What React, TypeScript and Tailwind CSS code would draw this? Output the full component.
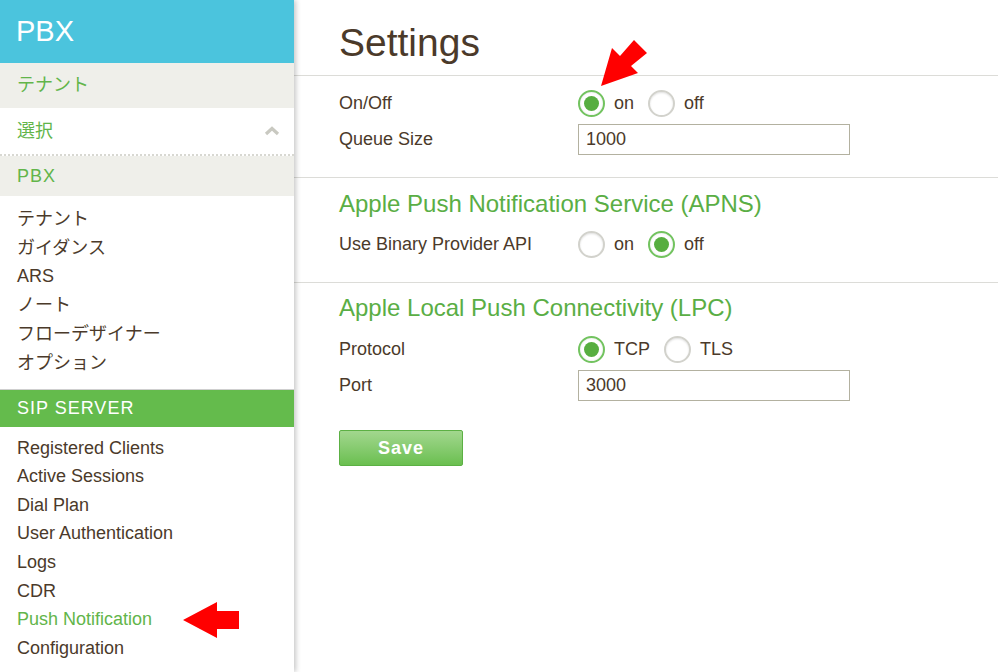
import React from 'react';

const FONT = '"Liberation Sans", "Noto Sans CJK JP", Arial, sans-serif';

const pbxItems = ['テナント', 'ガイダンス', 'ARS', 'ノート', 'フローデザイナー', 'オプション'];
const sipItems = [
  'Registered Clients',
  'Active Sessions',
  'Dial Plan',
  'User Authentication',
  'Logs',
  'CDR',
  'Push Notification',
  'Configuration',
];

const Radio = ({ checked, label }: { checked: boolean; label: string }) => (
  <label className="flex items-center mr-[14px]">
    {checked ? (
      <span className="w-[27px] h-[27px] rounded-full border-2 border-[#72c35f] bg-white flex items-center justify-center shadow-[inset_0_0_2px_rgba(0,0,0,0.15)]">
        <span className="w-[15px] h-[15px] rounded-full bg-[#57ae40]" />
      </span>
    ) : (
      <span className="w-[27px] h-[27px] rounded-full border-2 border-[#d2d2cc] bg-white shadow-[inset_0_1px_2px_rgba(0,0,0,0.12)]" />
    )}
    <span className="ml-[9px] text-[18px] text-[#4b3a2a]">{label}</span>
  </label>
);

const Row = ({ label, children, className = '' }: { label: string; children: React.ReactNode; className?: string }) => (
  <div className={`flex items-center ${className}`}>
    <div className="w-[239px] text-[18px] text-[#4b3a2a]">{label}</div>
    <div className="flex items-center">{children}</div>
  </div>
);

const TextBox = ({ value }: { value: string }) => (
  <div className="w-[272px] h-[31px] border border-[#b3b1a0] bg-white px-[7px] flex items-center text-[18px] text-[#4b3a2a]">
    {value}
  </div>
);

export default function App() {
  return (
    <div className="relative flex w-[998px] h-[672px] overflow-hidden bg-white" style={{ fontFamily: FONT }}>
      {/* Sidebar */}
      <aside className="relative z-10 w-[294px] shrink-0 h-full bg-white shadow-[2px_0_5px_rgba(0,0,0,0.22)]">
        <div className="h-[63px] bg-[#4bc4dd] flex items-center px-[16px] text-[29px] text-white">PBX</div>
        <div className="h-[45px] bg-[#efefea] flex items-center px-[17px] text-[18px] text-[#62b54a]">テナント</div>
        <div className="h-[48px] flex items-center justify-between px-[17px] text-[18px] text-[#62b54a] border-b-2 border-dotted border-[#d8d8d2]">
          <span>選択</span>
          <svg width="16" height="10" viewBox="0 0 16 10" className="mr-[-3px]">
            <polyline points="2,8 8,2.5 14,8" fill="none" stroke="#c9c9c1" strokeWidth="3.2" />
          </svg>
        </div>
        <div className="h-[40px] bg-[#efefea] flex items-center px-[17px] text-[18px] tracking-[1px] text-[#62b54a]">PBX</div>
        <ul className="pt-[9px] pb-[11px] px-[17px]">
          {pbxItems.map((t) => (
            <li key={t} className="h-[28.8px] flex items-center text-[18px] text-[#4b3a2a]">{t}</li>
          ))}
        </ul>
        <div className="h-[38px] bg-[#64bb4c] flex items-center px-[17px] text-[18px] tracking-[1px] text-white border-t border-[#cfcfcf]">
          SIP SERVER
        </div>
        <ul className="pt-[7px] px-[17px]">
          {sipItems.map((t) => (
            <li
              key={t}
              className={`h-[28.6px] flex items-center text-[18px] ${t === 'Push Notification' ? 'text-[#62b54a]' : 'text-[#4b3a2a]'}`}
            >
              {t}
            </li>
          ))}
        </ul>
      </aside>

      {/* Main */}
      <main className="flex-1 h-full">
        <div className="h-[76px] border-b border-[#dcdcd8] pl-[45px] pt-[20px]">
          <h1 className="text-[39px] leading-[46px] text-[#4b3a2a]">Settings</h1>
        </div>

        <section className="border-b border-[#dcdcd8] pl-[45px] pt-[13px] pb-[22px]">
          <Row label="On/Off" className="h-[28px]">
            <Radio checked label="on" />
            <Radio checked={false} label="off" />
          </Row>
          <Row label="Queue Size" className="mt-[7px]">
            <TextBox value="1000" />
          </Row>
        </section>

        <section className="border-b border-[#dcdcd8] pl-[45px] pt-[12px] pb-[24px]">
          <h2 className="text-[24px] leading-[28px] text-[#5aae45]">Apple Push Notification Service (APNS)</h2>
          <Row label="Use Binary Provider API" className="h-[28px] mt-[12px]">
            <Radio checked={false} label="on" />
            <Radio checked label="off" />
          </Row>
        </section>

        <section className="pl-[45px] pt-[11px]">
          <h2 className="text-[24px] leading-[28px] text-[#5aae45]">Apple Local Push Connectivity (LPC)</h2>
          <Row label="Protocol" className="h-[28px] mt-[13px]">
            <Radio checked label="TCP" />
            <Radio checked={false} label="TLS" />
          </Row>
          <Row label="Port" className="mt-[7px]">
            <TextBox value="3000" />
          </Row>
          <button className="mt-[29px] w-[124px] h-[36px] rounded-[2px] border border-[#5cb044] bg-gradient-to-b from-[#a2d78e] to-[#6abf4f] text-white text-[18px] font-bold tracking-[1px]">
            Save
          </button>
        </section>
      </main>

      {/* Annotation arrows */}
      <svg className="absolute left-[595px] top-[36px] z-20" width="58" height="56" viewBox="0 0 58 56">
        <polygon points="6,50 17,12 25,20 39,4 52,17 36,30 43,37" fill="#ff0000" />
      </svg>
      <svg className="absolute left-[180px] top-[600px] z-20" width="62" height="40" viewBox="0 0 62 40">
        <polygon points="3,20 37,2 37,11 59,11 59,29 37,29 37,38" fill="#ff0000" />
      </svg>
    </div>
  );
}
